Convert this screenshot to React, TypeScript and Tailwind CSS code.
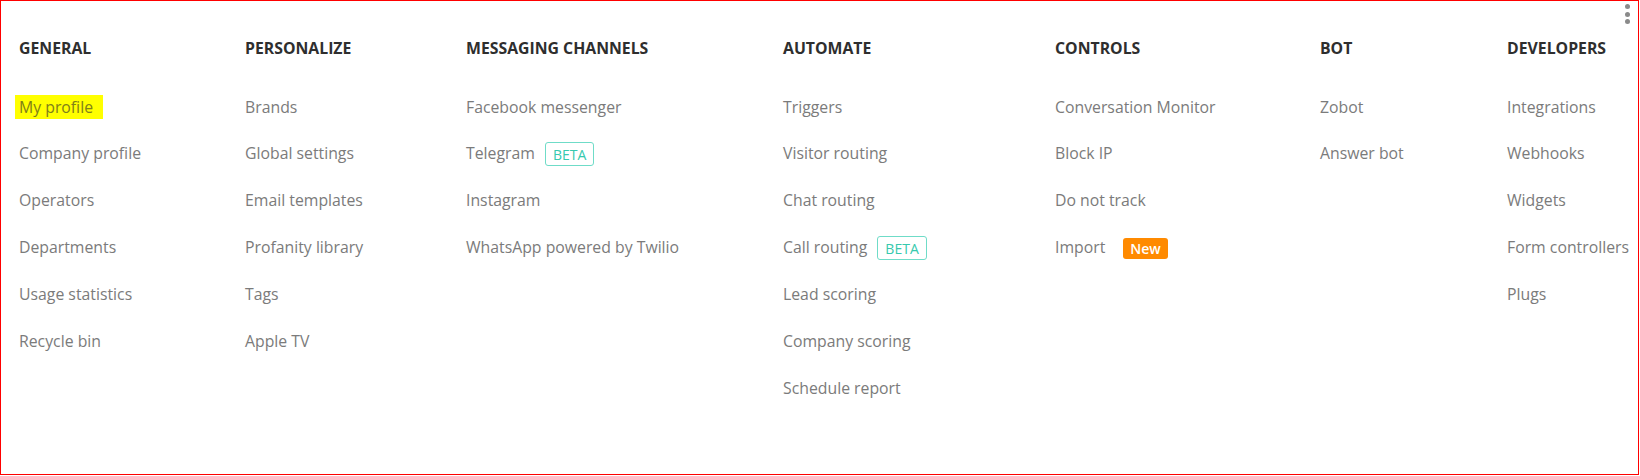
import React from "react"

type Item = { label: string; badge?: "beta" | "new"; mark?: boolean }
type Column = { title: string; items: Item[] }

const columns: Column[] = [
  {
    title: "GENERAL",
    items: [
      { label: "My profile", mark: true },
      { label: "Company profile" },
      { label: "Operators" },
      { label: "Departments" },
      { label: "Usage statistics" },
      { label: "Recycle bin" },
    ],
  },
  {
    title: "PERSONALIZE",
    items: [
      { label: "Brands" },
      { label: "Global settings" },
      { label: "Email templates" },
      { label: "Profanity library" },
      { label: "Tags" },
      { label: "Apple TV" },
    ],
  },
  {
    title: "MESSAGING CHANNELS",
    items: [
      { label: "Facebook messenger" },
      { label: "Telegram", badge: "beta" },
      { label: "Instagram" },
      { label: "WhatsApp powered by Twilio" },
    ],
  },
  {
    title: "AUTOMATE",
    items: [
      { label: "Triggers" },
      { label: "Visitor routing" },
      { label: "Chat routing" },
      { label: "Call routing", badge: "beta" },
      { label: "Lead scoring" },
      { label: "Company scoring" },
      { label: "Schedule report" },
    ],
  },
  {
    title: "CONTROLS",
    items: [
      { label: "Conversation Monitor" },
      { label: "Block IP" },
      { label: "Do not track" },
      { label: "Import", badge: "new" },
    ],
  },
  {
    title: "BOT",
    items: [{ label: "Zobot" }, { label: "Answer bot" }],
  },
  {
    title: "DEVELOPERS",
    items: [
      { label: "Integrations" },
      { label: "Webhooks" },
      { label: "Widgets" },
      { label: "Form controllers" },
      { label: "Plugs" },
    ],
  },
]

function Badge({ kind }: { kind: "beta" | "new" }) {
  if (kind === "new") {
    return (
      <span className="ml-[18px] flex h-[21px] items-center rounded-[3px] bg-[#ff8a00] px-[7px] text-[14px] font-semibold text-white">
        New
      </span>
    )
  }
  return (
    <span className="ml-[10px] flex h-[24px] items-center rounded-[3px] border border-[#6fdcc8] px-[7px] text-[14px] text-[#36c9ae]">
      BETA
    </span>
  )
}

export default function App() {
  return (
    <div
      className="relative h-[475px] w-[1639px] border border-[#ff0000] bg-white"
      style={{ fontFamily: '"Open Sans", "Noto Sans", sans-serif' }}
    >
      <div className="absolute right-[8px] top-[3px] flex flex-col items-center gap-[2.5px]">
        <span className="h-[5px] w-[5px] rounded-full bg-[#8a8a8a]" />
        <span className="h-[5px] w-[5px] rounded-full bg-[#8a8a8a]" />
        <span className="h-[5px] w-[5px] rounded-full bg-[#8a8a8a]" />
      </div>

      <div className="grid grid-cols-[226px_221px_317px_272px_265px_187px_1fr] pl-[18px] pt-[36px]">
        {columns.map((col) => (
          <div key={col.title}>
            <h2 className="text-[15.8px] font-bold leading-[22px] text-[#2e2e2e]">{col.title}</h2>
            <ul className="mt-[25px]">
              {col.items.map((item) => (
                <li key={item.label} className="flex h-[46.9px] items-center text-[15.8px] text-[#7b7b7b]">
                  {item.mark ? (
                    <span className="-ml-[4px] inline-block bg-[#ffff00] pl-[4px] pr-[10px] leading-[24px] text-[#80801a]">
                      {item.label}
                    </span>
                  ) : (
                    <span>{item.label}</span>
                  )}
                  {item.badge && <Badge kind={item.badge} />}
                </li>
              ))}
            </ul>
          </div>
        ))}
      </div>
    </div>
  )
}
